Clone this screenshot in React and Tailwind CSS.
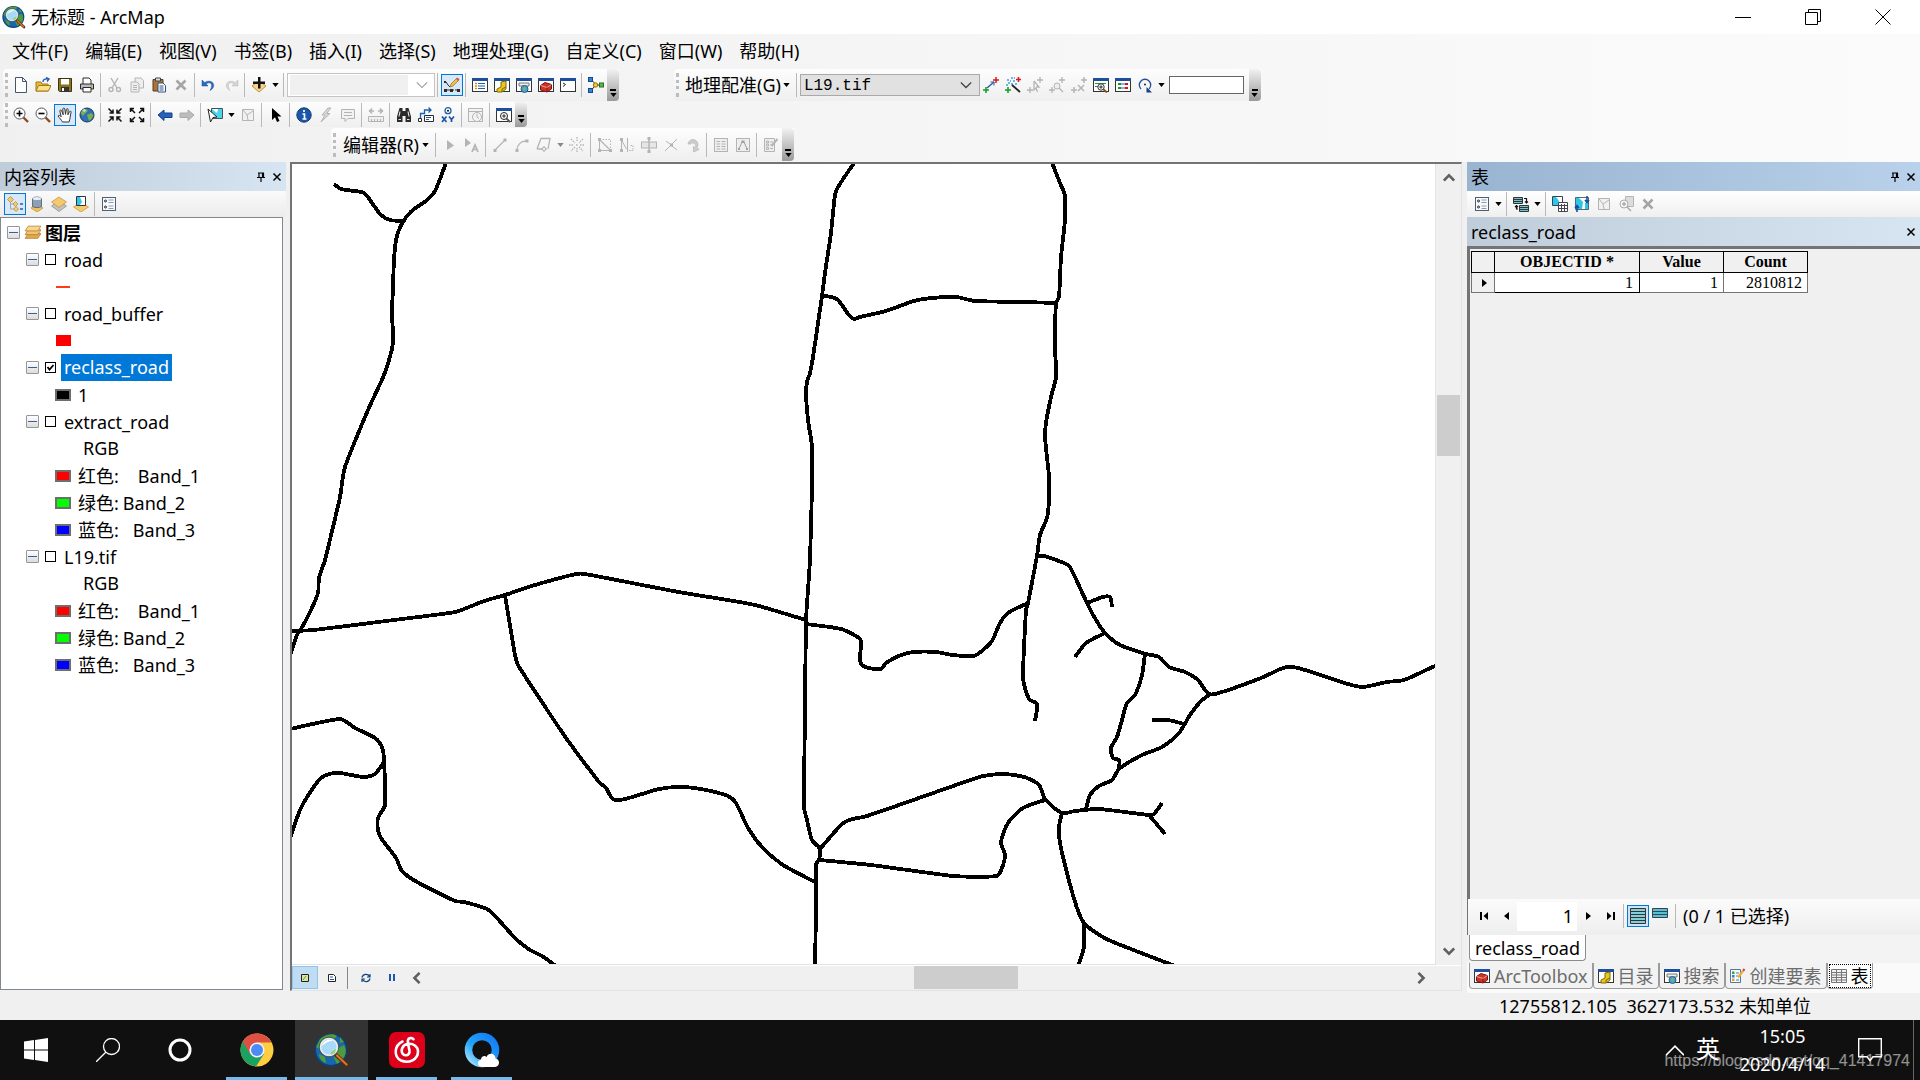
import React from "react";

const K = "#2b2b2b";
const B = "#1f5fae";
const G = "#b4b4b4";

const win = (
  <>
    <rect x=".5" y="1.500" width="15" height="13" fill="#fff" stroke="#333" />
    <rect x="0" y="1" width="16" height="3" fill="#1d4f9c" />
  </>
);
const layerShape = (fill, stroke) => (
  <path d="M2.500 2.500h11v11h-11zM3 3l4 5 1 5M7 8l6-4" fill={fill} stroke={stroke} />
);

const ICONS = {
  fresh: <path d="M2.500.5h7l4 4v11h-11zM9.500.5v4h4" fill="#fff" stroke="#44566f" />,
  open: (
    <>
      <path d="M1 14V5h5l1 2h6v7z" fill="#e8b93c" stroke="#a57a16" />
      <path d="M1 14l2.500-5.500H16L13.500 14z" fill="#fde08a" stroke="#a57a16" />
      <path d="M8 5c0-2.500 2-3.500 5-3M11 .5l3 1.500-2 2.500" fill="none" stroke={B} strokeWidth="1.400" />
    </>
  ),
  save: (
    <>
      <path d="M1.500 1.500h13v13h-12l-1-1z" fill="#8a7420" stroke="#3b3417" />
      <rect x="4" y="2" width="8" height="5.500" fill="#fff" />
      <rect x="4" y="10" width="8" height="4.500" fill="#333" />
      <rect x="5" y="11" width="2" height="3" fill="#fff" />
    </>
  ),
  print: (
    <>
      <path d="M4 7V1h6l2 2v4" fill="#fff" stroke={K} />
      <path d="M1.500 7h13v5h-13z" fill="#b9bcc0" stroke={K} />
      <path d="M4 10.500h8v4.500H4z" fill="#fff" stroke={K} />
      <rect x="11.500" y="8" width="1.500" height="1.500" fill="#d5a400" />
    </>
  ),
  cut: (
    <g fill="none" stroke={G} strokeWidth="1.400">
      <path d="M4 1l6 10M11 1L5 11" /><circle cx="4" cy="12.500" r="2" /><circle cx="11.500" cy="12.500" r="2" />
    </g>
  ),
  copy: (
    <g fill="#eee" stroke={G}>
      <path d="M6 1h6l2.500 2.500V11H6z" /><path d="M2 5h6l2 2v8H2zM4 8.500h4M4 10.500h4M4 12.500h4" />
    </g>
  ),
  paste: (
    <>
      <path d="M2 2.500h10V14H2z" fill="#a9763a" stroke="#5b3d17" />
      <path d="M4.500 1h5v3h-5z" fill="#ddd" stroke="#444" />
      <path d="M7 6h5l2.500 2.500V15H7zM8.500 9h4M8.500 11h4M8.500 13h4" fill="#fff" stroke="#33517c" />
    </>
  ),
  del: <path d="M3.500 3.500l9 9M12.500 3.500l-9 9" stroke="#a5a5a5" strokeWidth="2.600" />,
  undo: <path d="M1 3v6h6L5.200 7C9 4 13 7 9 13.500 16 10 12.500 1 3.600 5.400z" fill="#2a6cc0" stroke="#1b4c90" strokeWidth=".5" />,
  redo: <path d="M15 3v6H9l1.800-2C7 4 3 7 7 13.500 0 10 3.500 1 12.400 5.400z" fill="#d4d4d4" stroke="#bbb" strokeWidth=".5" />,
  add: (
    <>
      <path d="M8 4l7 5-7 6-7-6z" fill="#f3d58b" stroke="#c19233" />
      <path d="M7 0h2.500v4.500H14V7H9.500v4.500H7V7H2V4.500h5z" fill="#111" />
    </>
  ),
  edit: (
    <>
      <path d="M2 13h4M7 13h3M11 13h3M2 5l2 3 2 2" stroke={K} fill="none" />
      <path d="M0 12h3v3H0zM6 12h3v3H6zM13 12h3v3h-3zM0 4h2v2H0z" fill={K} />
      <path d="M6 10L7 7l5.500-5.500 2 2L9 9z" fill="#f2c14a" stroke="#8f6a1c" strokeWidth=".7" />
      <path d="M12 2l1.500-1.500 2 2L14 4z" fill="#d9503c" />
    </>
  ),
  toc: <>{win}<path d="M3 6.500h2M3 9h2M3 11.500h2" stroke="#d18f15" strokeWidth="1.400" /><path d="M6 6.500h7M6 9h7M6 11.500h7" stroke={B} /></>,
  catalog: <>{win}<path d="M3 12l4-2V5l5-1v8l-4 3H3z" fill="#e9c61d" stroke="#7e6a08" /><path d="M8 15v-3l4-2" stroke="#7e6a08" fill="none" /></>,
  search: <>{win}<path d="M3 6h10v3H3z" fill="#eee" stroke="#777" /><circle cx="8.500" cy="12" r="3.500" fill="#4c9fd6" stroke="#2c5d8a" /><path d="M7 11l2-1 1 2-2 2z" fill="#6fc04c" /></>,
  toolbox: <>{win}<path d="M2.500 8.500L7 5.500l6.500 2V12L9 15l-6.500-2z" fill="#cf3428" stroke="#7c150f" /><path d="M2.500 8.500l6.500 2 4.500-3" stroke="#f2a198" fill="none" /><path d="M9 10.500V15" stroke="#7c150f" /></>,
  python: <>{win}<path d="M3 6l2.500 1.500L3 9.500" fill="none" stroke="#222" /></>,
  model: (
    <>
      <path d="M4 3.500l4 4-4 5M9 8h3" stroke={K} fill="none" />
      <rect x=".5" y=".5" width="4" height="4" fill="#2f86d8" stroke="#164a86" /><rect x=".5" y="11.500" width="4" height="4" fill="#2f86d8" stroke="#164a86" />
      <circle cx="7.500" cy="8" r="2.200" fill="#f6c632" stroke="#957110" /><rect x="11.500" y="6" width="4" height="4" fill="#58b947" stroke="#25701b" />
    </>
  ),
  zin: <><path d="M10 10l5 5" stroke="#8a4b20" strokeWidth="2.400" /><circle cx="6.500" cy="6.500" r="5.500" fill="#fff" stroke="#555" /><path d="M6.500 3.500v6M3.500 6.500h6" stroke="#000" strokeWidth="1.600" /></>,
  zout: <><path d="M10 10l5 5" stroke="#8a4b20" strokeWidth="2.400" /><circle cx="6.500" cy="6.500" r="5.500" fill="#fff" stroke="#555" /><path d="M3.500 6.500h6" stroke="#000" strokeWidth="1.600" /></>,
  hand: <path d="M5.500 15c-1-2-3-4-4.500-6 .8-1.300 2-.6 3.200.8L2.800 4c.2-1.300 1.500-1.200 1.900 0l1.500 3.800L5.800 2c.3-1.200 1.700-1.200 2 0l.7 5.300L9.400 2.300c.4-1 1.600-.8 1.700.3l-.2 5.200 1.700-3.300c.7-.8 1.700-.2 1.500.8C13 9 13.300 12 12 15z" fill="#fff" stroke="#333" />,
  globe: <><circle cx="8" cy="8" r="7" fill="#2f6fb8" stroke="#143a66" /><path d="M4 2.500c3-1.500 5 0 4.500 2L6 6.500 4 9 1.500 6zM8 8l4-2 2.500 2-2 4-2.500 2z" fill="#79b04a" /><path d="M3 3l3-1 1 2-2 1z" fill="#e8f4ff" opacity=".7" /></>,
  fixin: <path d="M1.500 1.500l4.500 4.500M6 2.500V6H2.500M14.500 1.500L10 6M10 2.500V6h3.500M1.500 14.500L6 10M2.500 10H6v3.500M14.500 14.500L10 10M10 13.500V10h3.500" stroke="#111" strokeWidth="1.500" fill="none" />,
  fixout: <path d="M6 6L1.500 1.500M1.500 5V1.500H5M10 6l4.500-4.500M11 1.500h3.500V5M6 10l-4.500 4.500M1.500 11v3.500H5M10 10l4.500 4.500M11 14.500h3.500V11" stroke="#111" strokeWidth="1.500" fill="none" />,
  back: <path d="M1 8l6-5v3h8v4.500H7V13.500z" fill="#2661bd" stroke="#12408a" />,
  fwd: <path d="M15 8L9 3v3H1v4.500h8V13.500z" fill="#bdbdbd" stroke="#aaa" />,
  selfeat: <><path d="M4.500 1.500h11v10h-11z" fill="#49d3ee" stroke="#455" /><path d="M5 2h6l-1 4z" fill="#fff" /><path d="M1 2l9 8-4 .5L3.500 15z" fill="#fff" stroke="#222" /></>,
  clearsel: layerShape("#f1f1f1", G),
  pointer: <path d="M4 1v12l3-2.800 2 4.800 2.500-1-2-4.500h4z" fill="#000" />,
  info: <><circle cx="8" cy="8" r="7.200" fill="#1b57a8" stroke="#0f3a78" /><path d="M8 3v2M6.500 7H8.500v5M6.500 12h4" stroke="#fff" strokeWidth="1.700" fill="none" /></>,
  bolt: <path d="M10 1L4 8h3l-4 7 9-8.500H8.500L13 1z" fill="#d8d8d8" stroke={G} />,
  html: <path d="M1.500 2.500h13v9H8l-3 3v-3H1.500zM4 5.500h8M4 8.500h8" fill="#f2f2f2" stroke={G} />,
  ruler: <><path d="M1 4h5M10 4h5M4 1.500L1.500 4 4 6.500M12 1.500L14.500 4 12 6.500" stroke={G} strokeWidth="1.500" fill="none" /><path d="M.5 9.500h15v5H.5zM3.500 12v2M6.500 12v2M9.500 12v2M12.500 12v2" fill="#eee" stroke={G} /></>,
  binoc: <><path d="M3.500 1h3v3h3V1h3L15 9.500V15H9.500V9h-3v6H1V9.500z" fill="#2a2a2a" /><path d="M3 9.500l1-5M13 9.500l-1-5M2.500 12.500h2.500M11 12.500h2.500" stroke="#ddd" strokeWidth="1.200" /></>,
  route: <><path d="M2.500 12V6.500h4V3H13M10.500.5L13 3l-2.500 2.500" stroke={B} strokeWidth="1.300" fill="none" /><path d="M.5 11.500h3v3h-3zM6.500 8.500h9v6h-9z" fill="#fff" stroke={K} /><path d="M8 10.500h5M8 12.500h3" stroke={B} /></>,
  xy: <><circle cx="8" cy="3.700" r="3" fill="none" stroke={B} strokeWidth="1.300" /><circle cx="8" cy="3.700" r="1" fill="#111" /><path d="M2 9.500l4.500 5.500M6.500 9.500L2 15M9 9.500l2.500 3 2.500-3M11.500 12.500V15" stroke="#1a55a8" strokeWidth="1.700" fill="none" /></>,
  time: <g fill="#f3f3f3" stroke={G}><rect x=".5" y="1.500" width="14" height="13" /><path d="M.5 4.500h14" /><circle cx="9" cy="10" r="4.500" /><path d="M9 7v3l2 1.500" /></g>,
  viewer: <>{win}<path d="M10 11l4 4" stroke="#555" strokeWidth="1.800" /><circle cx="8" cy="9" r="3.500" fill="#fff" stroke="#222" /><path d="M8 7.200v3.600M6.200 9h3.600" stroke="#222" /></>,
  etool: <path d="M5 3v10l7-4.500z" fill={G} />,
  etoola: <><path d="M1 1v9l6-4z" fill={G} /><path d="M8 15l3-7 3 7M9 12.500h4" stroke={G} strokeWidth="1.700" fill="none" /></>,
  seg: <><path d="M3 13L13 3" stroke={G} strokeWidth="1.300" /><path d="M1.500 12h3v3h-3zM11.500 1.500h3v3h-3z" fill={G} /></>,
  arc: <><path d="M3 13c0-5 4-9 9-9" stroke={G} strokeWidth="1.300" fill="none" /><path d="M1.500 12h3v3h-3zM11.500 2.500h3v3h-3z" fill={G} /></>,
  trace: <><path d="M1 12L5 1.500h9L12 12M1 12h5" stroke={G} strokeWidth="1.300" fill="none" /><path d="M8 9v6M5 12h6" stroke={G} /><circle cx="8" cy="12" r="1.800" fill="#eee" stroke={G} /></>,
  burst: <path d="M8 0v5M8 11v5M0 8h5M11 8h5M2 2l4 4M10 10l4 4M14 2l-4 4M6 10l-4 4M7 8h2" stroke={G} strokeWidth="1.300" strokeDasharray="1.500 1" />,
  verts: <><path d="M2.500 2.500v11h11" stroke={G} fill="none" /><path d="M2.500 2.500h11v11" stroke={G} fill="none" strokeDasharray="1.500 1.500" /><path d="M2.500 2.500l11 11" stroke={G} strokeWidth="1.300" /><path d="M1 1h3v3H1zM1 12h3v3H1zM12 12h3v3h-3z" fill={G} /></>,
  reshape: <><path d="M2.500 2v12M2.500 3l5 9M8.500 1v14" stroke={G} fill="none" /><path d="M10 13.500h4v-5h-3" stroke={G} fill="none" strokeDasharray="1.500 1" /><path d="M1 1h3v3H1zM1 12h3v3H1z" fill={G} /></>,
  cutpoly: <><rect x=".5" y="5" width="15" height="6" fill="#e6e6e6" stroke={G} /><path d="M8 1v14" stroke={G} strokeWidth="1.500" /><path d="M6.500 0h3v3h-3zM6.500 13h3v3h-3z" fill={G} /></>,
  split: <><path d="M2 14L14 2M3 4l4 3M9 9l5 4" stroke={G} /><path d="M7 6.500h3v3H7z" fill={G} /></>,
  rotate: <path d="M3 7a5 5 0 1 1 9 3.500l2 2L8.500 15V9.500l1.500 1.200A2.800 2.800 0 1 0 5.500 7z" fill="#ccc" stroke={G} strokeWidth=".7" />,
  attrs: <><rect x="1.500" y="1.500" width="13" height="13" fill="#eee" stroke={G} /><path d="M3.500 4.500h3.500M8.500 4.500h4M3.500 7h3.500M8.500 7h4M3.500 9.500h3.500M8.500 9.500h4M3.500 12h3.500M8.500 12h4" stroke={G} /></>,
  sketch: <><rect x="1.500" y="1.500" width="13" height="13" fill="#eee" stroke={G} /><path d="M4 12l3-7h2l3 7" stroke="#a0a0a0" fill="none" /><path d="M6.500 3.500h3v2.500h-3zM3 11h2v2H3zM11 11h2v2h-2z" fill="#a0a0a0" /></>,
  createg: <><path d="M1.500 1.500h10v13h-10zM3.500 4h2v2h-2zM3.500 7h2v2h-2zM3.500 10.500h2v2h-2zM7 5h3M7 8h3M7 11.500h3" fill="#eee" stroke={G} /><path d="M8.500 9l6-7" stroke={G} strokeWidth="2" /></>,
  create: <><path d="M.5 1.500h10v13H.5z" fill="#f7fbff" stroke="#51789f" /><path d="M2 3.500h2.500V6H2z" fill="#3d9e46" /><path d="M2 7h2.500v2.500H2z" fill="#2f7fd0" /><path d="M2 10.500h2.500V13H2z" fill="#e0a224" /><path d="M6 5h3M6 8h2M6 12h3" stroke="#51789f" /><path d="M8 9.500L13 3" stroke="#e8b23a" strokeWidth="2.200" /><path d="M13 3l1.500-2" stroke="#d9503c" strokeWidth="2.200" /></>,
  link: <><path d="M4 11l7-6" stroke={B} strokeWidth="1.400" /><path d="M7.500 5H11v3.500" stroke={B} fill="none" /><path d="M13 0v6M10 3h6" stroke="#e01515" strokeWidth="1.500" /><path d="M3 10v6M0 13h6" stroke="#159a20" strokeWidth="1.500" /></>,
  autolink: <><path d="M2 3h2M6 1h2M3 6h2M8 4h2M6 7h2M5 4h1M10 7h2M1 8h2M9 1h1" stroke="#39a7dd" strokeWidth="1.600" /><path d="M7 8l8 7" stroke="#222" strokeWidth="1.800" /><path d="M13.500 0v5M11 2.500h5" stroke="#e01515" strokeWidth="1.500" /><path d="M3 10v6M0 13h6" stroke="#159a20" strokeWidth="1.500" /></>,
  linkg1: <path d="M13 0v6M10 3h6M3 10v6M0 13h6M7 4v9l2-2 1.500 4M7 4l5 6H9" stroke={G} strokeWidth="1.300" fill="none" />,
  linkg2: <><path d="M13 0v6M10 3h6M3 10v6M0 13h6M10 11l4 4" stroke={G} strokeWidth="1.300" /><circle cx="8" cy="9" r="3" fill="#eee" stroke={G} /></>,
  linkg3: <path d="M13 0v6M10 3h6M3 10v6M0 13h6M7 8l6 6M13 8l-6 6" stroke={G} strokeWidth="1.500" />,
  geoview: <>{win}<path d="M2 6.500h11M2 9.500h3" stroke="#1b9a2b" /><path d="M10 12l4 3.500" stroke="#8a4b20" strokeWidth="1.800" /><circle cx="8" cy="10" r="3.200" fill="#fff" stroke="#333" /><path d="M8 8.300v3.400M6.300 10h3.400" stroke="#222" /></>,
  linktable: <>{win}<path d="M3 7h3M3 11h3" stroke="#159a20" strokeWidth="2" /><path d="M10 7h3M10 11h3" stroke="#d11" strokeWidth="2" /><path d="M6 7h4M6 11h4" stroke={B} /></>,
  spin: <><path d="M4 12A5.700 5.700 0 1 1 12 12" stroke="#23509a" strokeWidth="1.300" fill="none" /><path d="M9.500 10l5.500 5.500H9.500z" fill="#1d3f86" /><circle cx="8" cy="7.500" r="1" fill="#222" /></>,
  orderlist: <><path d="M3.500 5v8h4M4 8h5" stroke="#9aa7b4" fill="none" /><path d="M3.500.5l3 3-3 3-3-3zM8.500 5.500L11 8l-2.500 2.500L6 8zM9 10.500l2.500 2.500L9 15.500 6.500 13z" fill="#f1c877" stroke="#c28d2d" strokeWidth=".8" /><path d="M13 8h3M13 13h3" stroke={B} strokeWidth="1.300" /></>,
  source: <><path d="M8 8l6 4-6 4-6-4z" fill="#f1c35a" stroke="#bb8a25" strokeWidth=".7" /><path d="M3.500 2.500c2-2 7-2 9 0v8c-2 1.500-7 1.500-9 0z" fill="#8d9fb5" stroke="#4b5b70" strokeWidth=".8" /><ellipse cx="8" cy="2.600" rx="4.300" ry="1.500" fill="#e7edf4" /></>,
  visible: <><path d="M8 5l7.500 5L8 15.500.5 10z" fill="#c2c2c2" stroke="#888" strokeWidth=".7" /><path d="M8 1l7.500 5L8 11.500.5 6z" fill="#f5c971" stroke="#c08c2c" strokeWidth=".7" /></>,
  bysel: <><path d="M8 6l7.500 5L8 16 .5 11z" fill="#f5c971" stroke="#c08c2c" strokeWidth=".7" /><path d="M3.500 .5h9v9h-9z" fill="#fff" stroke="#333" /><path d="M4 1h3l2 5-2 3H4z" fill="#2dc6e8" /></>,
  options: <><rect x="1.500" y="1.500" width="13" height="13" fill="#f7fafd" stroke="#4c5f75" /><circle cx="4.500" cy="5" r="1" fill="none" stroke="#222" /><circle cx="4.500" cy="11" r="1" fill="none" stroke="#222" /><path d="M7.500 4h5M7.500 6.500h5M7.500 10h5M7.500 12.500h5" stroke="#8b9bad" /></>,
  layers: <><path d="M4 9h12l-3 4.500H1z" fill="#e2a94a" stroke="#b07a22" strokeWidth=".7" /><path d="M4 5.500h12L13 10H1z" fill="#f0c274" stroke="#b07a22" strokeWidth=".7" /><path d="M4 2h12l-3 4.500H1z" fill="#f8d794" stroke="#b07a22" strokeWidth=".7" /></>,
  related: <><path d="M.5 1.500h9v6h-9zM6.500 9.500h9v6h-9z" fill="#69c6d0" stroke="#333" /><path d="M.5 3.500h9M.5 5.500h9M6.500 11.500h9M6.500 13.500h9" stroke="#333" /><path d="M11 2.500h2.500V7M12 5.500l1.500 1.500L15 5.500M3.500 9.500V13H5M2 11l1.500-1.500L5 11" stroke="#111" strokeWidth="1.200" fill="none" /></>,
  selattr: <><path d="M.5 .5h10v9H.5z" fill="#fff" stroke="#345" /><path d="M1 1h3l3 4-1 4H1z" fill="#2dc6e8" /><path d="M6.500 6.500h9v9h-9zM6.500 9.500h9M6.500 12.500h9M9.500 8v7M12.500 8v7" fill="#fff" stroke="#445" /></>,
  switchsel: <><path d="M1.500 1.500h13v12h-13z" fill="#2dc6e8" stroke="#567" /><path d="M5 2l4 4-1 7h3V7l3-1V2z" fill="#fff" /><path d="M13 0v6M11 4l2 2.500L15 4M3 16v-6M1 12l2-2.500L5 12" stroke="#164f9e" strokeWidth="1.600" fill="none" /></>,
  zoomsel: <><path d="M7.500 .5h8v10h-8z" fill="#ddd" stroke={G} /><circle cx="6" cy="8" r="4" fill="#f6f6f6" stroke="#aaa" /><path d="M6 6v4M4 8h4M9 11l4 4" stroke="#aaa" strokeWidth="1.500" /></>,
  tablei: <path d="M.5 1.500h15v13H.5zM.5 4.500h15M.5 7h15M.5 9.500h15M.5 12h15M5.500 2v12M10.500 2v12" fill="#f2f2f2" stroke="#777" />,
};

function Icon({ n, className = "size-4" }) {
  return <svg viewBox="0 0 16 16" className={`${className} shrink-0`} aria-hidden="true">{ICONS[n]}</svg>;
}
function Tool({ n, label, active }) {
  return (
    <button aria-label={label} className={active ? "flex size-[22px] shrink-0 items-center justify-center border border-[#0078d7] bg-[#d8e8f8]" : "flex size-[22px] shrink-0 items-center justify-center"}>
      <Icon n={n} />
    </button>
  );
}
const Sep = () => <span className="mx-[2px] h-6 w-[2px] shrink-0 border-l border-[#b9b9b9]" />;
const Caret = ({ dim }) => (
  <svg viewBox="0 0 8 5" className="h-[4px] w-[7px] shrink-0" aria-hidden="true"><path d="M0 0h8L4 5z" fill={dim ? "#888" : "#000"} /></svg>
);
const DropArrow = ({ label, dim }) => <button aria-label={label} className="flex h-[22px] w-[11px] shrink-0 items-center justify-center"><Caret dim={dim} /></button>;
const Grip = () => <span className="mx-[2px] h-6 w-[3px] shrink-0 border-l-[3px] border-dotted border-[#bdbdbd]" />;
function Overflow() {
  return (
    <button aria-label="工具栏选项" className="flex w-3 shrink-0 flex-col items-center justify-end gap-[2px] self-stretch rounded-r-sm bg-gradient-to-b from-[#f2f2f2] to-[#9a9a9a] pb-1">
      <span className="h-[2px] w-[6px] bg-black" /><Caret />
    </button>
  );
}
const Tools = ({ items }) => items.map(([n, label, active], i) => (n === "|" ? <Sep key={i} /> : n === "v" ? <DropArrow key={i} label={label} dim={active} /> : <Tool key={i} n={n} label={label} active={active} />));
const BAR = "flex items-center rounded-l bg-gradient-to-b from-[#fdfdfd] to-[#efefef]";

function ArcLogo({ className }) {
  return (
    <svg viewBox="0 0 36 36" className={className} aria-hidden="true">
      <circle cx="17" cy="18" r="16.500" fill="#0c3f78" />
      <circle cx="17" cy="18" r="15" fill="#1767ad" />
      <path d="M6 7c5-5 14-6 17-3l-5 5-8 3-3 6-5-3zM22 17l8-4c3 5 2 11-2 15l-5 4-3-6zM5 22l6 3 1 6c-4-1-7-5-7-9zM26 5l4 5-4 1z" fill="#4f9a3a" />
      <path d="M22 23l11 10" stroke="#5a2c10" strokeWidth="4" strokeLinecap="round" />
      <path d="M23 23.500l9.500 9" stroke="#d9742c" strokeWidth="2.200" strokeLinecap="round" />
      <circle cx="15" cy="15" r="8.500" fill="#a6daf8" stroke="#e6e9ec" strokeWidth="2" />
      <circle cx="15" cy="15" r="9.800" fill="none" stroke="#4a5158" strokeWidth=".9" />
      <path d="M8 14c1-5 7-8 11-5-5 0-8 2-11 5z" fill="#fff" />
      <path d="M17 20l5-3-1 4-4 2z" fill="#9ad072" />
    </svg>
  );
}

const PinClose = () => (
  <span className="flex items-center gap-[6px]">
    <button aria-label="自动隐藏"><svg viewBox="0 0 10 10" className="size-[10px]"><path d="M2 1h6M3 1v4.500M6.500 1v4.500M7.500 1v4.500M1 5.500h8M5 6v4" stroke="#000" strokeWidth="1.200" fill="none" /></svg></button>
    <CloseX label="关闭" />
  </span>
);
const CloseX = ({ label }) => <button aria-label={label}><svg viewBox="0 0 10 10" className="size-[10px]"><path d="M1.500 1.500l7 7M8.500 1.500l-7 7" stroke="#000" strokeWidth="1.500" /></svg></button>;

const Expander = () => (
  <button aria-label="折叠" className="flex size-[13px] shrink-0 items-center justify-center rounded-[1px] border border-[#969696] bg-gradient-to-b from-white to-[#dcdcdc]">
    <span className="h-px w-[9px] bg-[#3b5ba5]" />
  </button>
);
function Layer({ name, checked, selected }) {
  const id = `layer-${name}`;
  return (
    <div className="flex h-[27px] items-center pl-[25px]">
      <Expander />
      <span className="relative ml-[6px] flex size-[11px]">
        <input id={id} type="checkbox" defaultChecked={checked} className="peer size-[11px] appearance-none border border-black bg-white" />
        <svg viewBox="0 0 11 11" className="pointer-events-none absolute inset-0 hidden size-[11px] peer-checked:block"><path d="M2.500 5l2 2.500L8.500 3" stroke="#000" strokeWidth="1.800" fill="none" /></svg>
      </span>
      <label htmlFor={id} className={selected ? "ml-[5px] h-[27px] bg-[#0078d7] px-[3px] leading-[26px] text-white" : "ml-[5px] px-[3px] leading-[26px]"}>{name}</label>
    </div>
  );
}
function Legend({ swatch, label, band, gap = "" }) {
  return (
    <div className="flex h-[27px] items-center pl-[54px]">
      <span className={`${swatch} h-3 w-4 border-2 border-[#6e6e6e]`} />
      <span className="ml-[7px] leading-[26px]">{label}</span>
      {band && <span className={`${gap} leading-[26px]`}>{band}</span>}
    </div>
  );
}
const Bands = () => (
  <>
    <div className="h-[27px] pl-[82px] leading-[26px]">RGB</div>
    <Legend swatch="bg-[#ff0000]" label="红色:" band="Band_1" gap="ml-[19px]" />
    <Legend swatch="bg-[#00ff00]" label="绿色:" band="Band_2" gap="ml-[4px]" />
    <Legend swatch="bg-[#0000ff]" label="蓝色:" band="Band_3" gap="ml-[14px]" />
  </>
);

const ROADS = [
  "447,160 435,191 426,201 414,209 407,216 403,222 399,230 396,240 394,260 393,287 392,313 393,335 392,349 384,375 368,410 345,467 340,497 333,527 325,560 319,578 318,593 310,612 301,629 297,635 290,656",
  "334,184 341,189 364,193 372,203 381,215 390,220 402,221",
  "290,631 314,630 394,620 455,612 484,601 505,595 535,585 576,574 585,574 637,584 684,593 734,601 759,606 806,620",
  "806,624 841,629 859,638 861,642 860,660 862,665 869,668 881,669 886,663 901,655 914,652 936,652 953,655 974,656 983,650 992,641 1000,623 1008,613 1028,603",
  "856,160 838,187 835,195 831,233 825,273 822,296 813,357 810,373 807,382 806,393 808,420 812,447 812,487 810,560 806,620 805,707 804,807 807,820 812,840 820,849 819,860 816,864 816,908 815,966",
  "1051,160 1060,183 1064,192 1065,198 1065,220 1061,257 1059,297 1056,303 1055,347 1056,377 1051,397 1046,423 1045,437 1049,477 1049,500 1047,518 1040,535 1037,556 1028,603 1026,610 1023,677 1029,699 1037,704 1035,721",
  "822,296 832,297 838,300 849,315 854,319 860,317 886,311 914,301 932,298 956,297 975,301 1023,302 1057,303",
  "1037,556 1044,556 1064,563 1070,567 1087,603 1096,620 1105,633 1120,645 1146,654 1159,657 1169,667 1185,672 1198,680 1209,694 1222,692 1261,678 1283,668 1292,667 1305,670 1348,684 1363,687 1387,682 1404,680 1424,671 1437,665",
  "1087,603 1103,597 1110,597 1112,607",
  "1105,633 1086,643 1075,657",
  "1145,654 1142,675 1135,695 1127,703 1122,720 1117,737 1111,748 1113,758 1119,760 1119,769",
  "1209,695 1201,701 1190,715 1179,733 1162,747 1142,755 1119,769 1112,780 1099,786 1090,795 1086,809",
  "1152,720 1168,720 1184,724",
  "820,849 841,825 849,820 867,816 919,798 979,777 990,775 1002,774 1014,775 1027,778 1039,785 1045,799 1062,813 1075,811 1099,809 1149,815 1154,814 1162,803",
  "1149,815 1165,834",
  "820,860 871,865 953,876 997,876 1002,868 1005,855 1001,842 1008,823 1023,808 1045,800",
  "1062,813 1059,827 1060,843 1068,877 1077,908 1084,923 1101,936 1118,944 1175,966",
  "1084,923 1084,947 1078,966",
  "505,595 512,637 518,665 566,738 599,782 606,788 613,799 625,799 659,789 680,787 701,789 728,796 736,803 748,828 762,847 783,865 815,882",
  "290,729 340,719 355,728 375,738 382,747 384,760 385,805 378,818 378,830 381,838 396,858 402,871 417,882 455,901 464,902 487,909 496,917 516,939 530,950 542,956 556,966",
  "290,838 301,808 318,781 326,775 339,773 364,777 375,774 384,762",
];

// Rounds a polyline: a gentle cubic through every vertex.
function smooth(points) {
  const p = points.split(" ").map((s) => s.split(",").map(Number));
  let d = `M${p[0][0]} ${p[0][1]}`;
  for (let i = 0; i < p.length - 1; i++) {
    const a = p[i];
    const b = p[i + 1];
    const len = Math.hypot(b[0] - a[0], b[1] - a[1]);
    const tangent = (prev, next) => {
      const l = Math.hypot(next[0] - prev[0], next[1] - prev[1]) || 1;
      const k = Math.min(len * 0.25, 8) / l;
      return [(next[0] - prev[0]) * k, (next[1] - prev[1]) * k];
    };
    const ta = tangent(p[i - 1] || a, b);
    const tb = tangent(a, p[i + 2] || b);
    d += `C${a[0] + ta[0]} ${a[1] + ta[1]} ${b[0] - tb[0]} ${b[1] - tb[1]} ${b[0]} ${b[1]}`;
  }
  return d;
}

const Chevron = ({ d, className = "size-[12px]", stroke = "#606060", w = 3 }) => (
  <svg viewBox="0 0 14 14" className={className} aria-hidden="true"><path d={d} stroke={stroke} strokeWidth={w} fill="none" /></svg>
);

const TREE_TABS = [["toolbox", "ArcToolbox"], ["catalog", "目录"], ["search", "搜索"], ["create", "创建要素"]];
const NAV = "flex h-[22px] w-[22px] items-center justify-center";

export default function App() {
  return (
    <div className="flex h-screen flex-col overflow-hidden bg-[#f0f0f0] font-['Noto_Sans','Noto_Sans_CJK_SC',sans-serif] text-[18px] leading-[26px] text-black">
      <header className="flex h-[34px] shrink-0 items-center bg-white pl-[2px]">
        <ArcLogo className="size-[24px]" />
        <h1 className="ml-[5px] grow">无标题 - ArcMap</h1>
        <div className="flex gap-[54px] pr-[29px]">
          <button aria-label="最小化"><svg viewBox="0 0 16 16" className="size-4"><path d="M0 8.500h16" stroke="#000" /></svg></button>
          <button aria-label="还原"><svg viewBox="0 0 16 16" className="size-4"><path d="M.5 3.500h12v12H.5zM3.500 3.500v-3h12v12h-3" fill="none" stroke="#000" /></svg></button>
          <button aria-label="关闭"><svg viewBox="0 0 16 16" className="size-4"><path d="M.5.5l15 15M15.500.5l-15 15" stroke="#000" /></svg></button>
        </div>
      </header>

      <div className="flex h-[128px] shrink-0 flex-col bg-gradient-to-r from-[#f0f0f0] to-[#fbfbfb]">
        <nav className="flex h-[35px] shrink-0 items-center gap-[17px] pb-[2px] pl-3">
          {["文件(F)", "编辑(E)", "视图(V)", "书签(B)", "插入(I)", "选择(S)", "地理处理(G)", "自定义(C)", "窗口(W)", "帮助(H)"].map((m) => <button key={m}>{m}</button>)}
        </nav>
        <div className="flex h-[33px] shrink-0 items-start">
          <div className={`${BAR} ml-[3px] h-[32px]`}>
            <Grip />
            <Tools items={[["fresh", "新建"], ["open", "打开"], ["save", "保存"], ["print", "打印"], ["|"], ["cut", "剪切"], ["copy", "复制"], ["paste", "粘贴"], ["del", "删除"], ["|"], ["undo", "撤消"], ["redo", "恢复"], ["|"], ["add", "添加数据"], ["v", "添加数据选项"], ["|"]]} />
            <span className="relative flex h-[24px] w-[148px] items-center border border-[#c4c4c4] bg-white pl-[2px]">
              <select aria-label="地图比例" disabled className="h-[20px] w-[118px] appearance-none bg-[#f0f0f0]" />
              <Chevron d="M1 4l6 6 6-6" w={1.3} stroke="#999" className="ml-2 size-[12px]" />
            </span>
            <Sep />
            <Tools items={[["edit", "编辑器工具条", true], ["|"], ["toc", "内容列表"], ["catalog", "目录"], ["search", "搜索"], ["toolbox", "ArcToolbox"], ["python", "Python"], ["|"], ["model", "模型构建器"]]} />
            <Overflow />
          </div>
          <div className={`${BAR} ml-[55px] h-[32px]`}>
            <Grip />
            <button className="ml-[4px] flex items-center gap-[2px] pr-1">地理配准(G)<Caret /></button>
            <Sep />
            <span className="relative flex h-[22px] w-[180px] items-center border border-[#a9a9a9] bg-[#e1e1e1]">
              <select aria-label="配准图层" className="h-[20px] w-full appearance-none pt-[3px] pl-[3px] font-['Liberation_Mono',monospace] text-[16px] leading-[17px]"><option>L19.tif</option></select>
              <Chevron d="M1 4l6 6 6-6" w={1.5} stroke="#444" className="pointer-events-none absolute right-[7px] size-[12px]" />
            </span>
            <Tools items={[["link", "添加控制点"], ["autolink", "自动配准"], ["linkg1", "选择连接"], ["linkg2", "缩放至连接"], ["linkg3", "删除连接"], ["geoview", "查看器"], ["linktable", "查看连接表"], ["spin", "旋转"], ["v", "旋转选项"]]} />
            <input aria-label="旋转角度" className="mr-[5px] ml-[2px] h-[18px] w-[75px] border border-[#666] bg-white" />
            <Overflow />
          </div>
        </div>
        <div className="flex h-[26px] shrink-0 items-start">
          <div className={`${BAR} ml-[3px] h-[25px]`}>
            <Grip />
            <Tools items={[["zin", "放大"], ["zout", "缩小"], ["hand", "平移", true], ["globe", "全图"], ["|"], ["fixin", "固定比例放大"], ["fixout", "固定比例缩小"], ["|"], ["back", "上一视图"], ["fwd", "下一视图"], ["|"], ["selfeat", "选择要素"], ["v", "选择要素选项"], ["clearsel", "清除所选要素"], ["|"], ["pointer", "选择元素"], ["|"], ["info", "识别"], ["bolt", "超链接"], ["html", "HTML 弹出窗口"], ["|"], ["ruler", "测量"], ["|"], ["binoc", "查找"], ["route", "查找路径"], ["xy", "转到 XY"], ["|"], ["time", "时间滑块"], ["|"], ["viewer", "创建查看器窗口"]]} />
            <Overflow />
          </div>
        </div>
        <div className="flex h-[34px] shrink-0 items-start">
          <div className={`${BAR} ml-[331px] h-[33px]`}>
            <Grip />
            <button className="ml-[5px] flex items-center gap-[3px] pr-1">编辑器(R)<Caret /></button>
            <Tools items={[["|"], ["etool", "编辑工具"], ["etoola", "编辑注记工具"], ["|"], ["seg", "直线段"], ["arc", "端点弧段"], ["trace", "追踪"], ["v", "追踪选项", true], ["burst", "点"], ["|"], ["verts", "编辑折点"], ["reshape", "整形要素"], ["cutpoly", "裁剪面"], ["split", "分割"], ["rotate", "旋转"], ["|"], ["attrs", "属性"], ["sketch", "草图属性"], ["|"], ["createg", "创建要素"]]} />
            <Overflow />
          </div>
        </div>
      </div>

      <main className="flex min-h-0 grow">
        <aside className="mr-1 flex w-[286px] shrink-0 flex-col">
          <div className="flex h-[29px] shrink-0 items-center justify-between bg-gradient-to-r from-[#bfcddb] to-[#d7e4f2] pr-1 pl-1">
            <h2>内容列表</h2><PinClose />
          </div>
          <div className="flex h-[26px] shrink-0 items-center bg-gradient-to-b from-[#fafafa] to-[#ececec] pl-1">
            <Tools items={[["orderlist", "按绘制顺序列出", true], ["source", "按源列出"], ["visible", "按可见性列出"], ["bysel", "按选择列出"], ["|"], ["options", "选项"]]} />
          </div>
          <div className="mr-[3px] grow border border-[#828790] bg-white pt-px">
            <div className="flex h-[27px] items-center pl-[6px] font-bold">
              <Expander /><Icon n="layers" className="mx-1 size-[17px]" /><span className="leading-[26px]">图层</span>
            </div>
            <Layer name="road" />
            <div className="flex h-[27px] items-center pl-[55px]"><span className="h-[2px] w-[14px] bg-[#ff3a1a]" /></div>
            <Layer name="road_buffer" />
            <div className="flex h-[27px] items-center pl-[55px]"><span className="h-[11px] w-[15px] bg-[#ff0000]" /></div>
            <Layer name="reclass_road" checked selected />
            <Legend swatch="bg-black" label="1" />
            <Layer name="extract_road" />
            <Bands />
            <Layer name="L19.tif" />
            <Bands />
          </div>
          <div className="h-[30px] shrink-0" />
        </aside>

        <section className="mb-[29px] flex min-w-0 grow flex-col border-t-2 border-l-2 border-[#747474] border-r border-r-[#e3e3e3] border-b border-b-[#e3e3e3]">
          <div className="flex min-h-0 grow">
            <div className="min-w-0 grow overflow-hidden border-r border-b border-[#e3e3e3] bg-white">
              <svg viewBox="292 164 1143 800" preserveAspectRatio="xMinYMin slice" className="block h-full w-full" role="img" aria-label="道路地图">
                {ROADS.map((p) => <path key={p} d={smooth(p)} fill="none" stroke="#000" strokeWidth="3.800" strokeLinejoin="round" shapeRendering="crispEdges" />)}
              </svg>
            </div>
            <div className="flex w-[25px] shrink-0 flex-col items-center pt-2 pb-2">
              <button aria-label="向上滚动"><Chevron d="M1 10l6-6 6 6" /></button>
              <div className="grow-[209]" />
              <div className="h-[61px] w-[23px] bg-[#cdcdcd]" />
              <div className="grow-[484]" />
              <button aria-label="向下滚动"><Chevron d="M1 4l6 6 6-6" /></button>
            </div>
          </div>
          <div className="flex h-[25px] shrink-0 items-center border-t border-white pb-px">
            <button aria-label="数据视图" className="flex h-[23px] w-[26px] items-center justify-center border border-[#8ec5f0] bg-[#bfdcf3]">
              <svg viewBox="0 0 8 8" className="size-[8px]"><path d="M.5.5h7v7h-7z" fill="#d9e39b" stroke="#222" /><path d="M2 6l3-4" stroke="#5b9b55" /></svg>
            </button>
            <button aria-label="布局视图" className="ml-[10px]"><svg viewBox="0 0 8 8" className="size-[8px]"><path d="M.5.5h5l2 2v5h-7z" fill="#fff" stroke="#222" /><path d="M2 3h3M2 5.500h4" stroke={B} /></svg></button>
            <span className="ml-[11px] h-[22px] w-px bg-[#888]" />
            <button aria-label="刷新" className="ml-[13px]"><svg viewBox="0 0 10 10" className="size-[10px]"><path d="M1 4.500C2 .5 7 .5 8.500 3.500M9 5.500c-1 4-6 4-7.500 1M9 1v3H6M1 9V6h3" stroke="#12457f" strokeWidth="1.200" fill="none" /></svg></button>
            <button aria-label="暂停" className="ml-[18px] flex gap-[2px]"><span className="h-[7px] w-[2px] bg-[#1c56b0]" /><span className="h-[7px] w-[2px] bg-[#1c56b0]" /></button>
            <button aria-label="向左滚动" className="ml-[16px]"><Chevron d="M10 1L4 7l6 6" /></button>
            <div className="grow-[492]" />
            <div className="h-[23px] w-[104px] bg-[#cdcdcd]" />
            <div className="grow-[397]" />
            <button aria-label="向右滚动" className="mr-[34px]"><Chevron d="M4 1l6 6-6 6" /></button>
          </div>
        </section>

        <aside className="ml-[5px] flex w-[453px] shrink-0 flex-col">
          <div className="flex h-[29px] shrink-0 items-center justify-between bg-gradient-to-r from-[#99b4d1] to-[#b9d1ea] pr-1 pl-1">
            <h2>表</h2><PinClose />
          </div>
          <div className="flex h-[26px] shrink-0 items-center bg-gradient-to-b from-white to-[#efefef] pl-1">
            <Tools items={[["options", "表选项"], ["v", "表选项菜单"], ["|"], ["related", "关联表"], ["v", "关联表菜单"], ["|"], ["selattr", "按属性选择"], ["switchsel", "切换选择"], ["clearsel", "清除所选内容"], ["zoomsel", "缩放至所选项"], ["del", "删除所选项"]]} />
          </div>
          <div className="flex h-[29px] shrink-0 items-center justify-between bg-gradient-to-r from-[#bfcddb] to-[#d7e4f2] pr-1 pl-1">
            <h3>reclass_road</h3><CloseX label="关闭表" />
          </div>
          <div className="min-h-0 grow border-t-[3px] border-l-[3px] border-[#747474] pt-[2px] pl-px">
            <table className="w-[337px] table-fixed border-collapse font-['Liberation_Serif',serif] text-[16px] leading-[18px]">
              <thead>
                <tr className="h-[21px]">
                  <th className="w-[23px] border border-black bg-[#f0f0f0]" />
                  <th className="w-[145px] border border-black bg-[#f0f0f0]">OBJECTID *</th>
                  <th className="w-[84px] border border-black bg-[#f0f0f0]">Value</th>
                  <th className="border border-black bg-[#f0f0f0]">Count</th>
                </tr>
              </thead>
              <tbody>
                <tr className="h-[20px] bg-white text-right">
                  <td className="border border-[#747474] bg-[#f0f0f0] pl-[10px]"><svg viewBox="0 0 5 8" className="h-[8px] w-[5px]"><path d="M0 0l5 4-5 4z" /></svg></td>
                  <td className="border border-black pr-[6px]">1</td>
                  <td className="border border-[#747474] pr-[5px]">1</td>
                  <td className="border border-[#747474] pr-[5px]">2810812</td>
                </tr>
              </tbody>
            </table>
          </div>
          <div className="flex h-[36px] shrink-0 items-center border-l border-[#747474] bg-gradient-to-b from-[#fbfbfb] to-[#eeeeee] pb-[2px] pl-[5px]">
            <button aria-label="首条记录" className={NAV}><svg viewBox="0 0 9 8" className="h-[8px] w-[9px]"><path d="M0 0h2v8H0zM8 0v8L3.500 4z" /></svg></button>
            <button aria-label="上一条" className={NAV}><svg viewBox="0 0 5 8" className="h-[8px] w-[5px]"><path d="M5 0v8L0 4z" /></svg></button>
            <input aria-label="当前记录" defaultValue="1" className="h-[29px] w-[60px] bg-white pr-1 text-right" />
            <button aria-label="下一条" className={NAV}><svg viewBox="0 0 5 8" className="h-[8px] w-[5px]"><path d="M0 0v8l5-4z" /></svg></button>
            <button aria-label="末条记录" className={NAV}><svg viewBox="0 0 9 8" className="h-[8px] w-[9px]"><path d="M7 0h2v8H7zM1 0v8l4.500-4z" /></svg></button>
            <Sep />
            <button aria-label="显示所有记录" className="flex size-[22px] items-center justify-center border border-[#0078d7] bg-[#cfe4f7]"><svg viewBox="0 0 16 16" className="size-4"><path d="M.5.5h15v15H.5zM1 3.500h14M1 6.500h14M1 9.500h14M1 12.500h14" fill="#7fd0dc" stroke="#333" /></svg></button>
            <button aria-label="显示所选记录" className="mb-[6px] ml-[3px]"><svg viewBox="0 0 16 10" className="h-[10px] w-4"><path d="M.5.5h15v9H.5zM1 3.500h14M1 6.500h14" fill="#58c0d2" stroke="#345" /></svg></button>
            <span className="ml-[5px]"><Sep /></span>
            <span className="ml-[5px]">(0 / 1 已选择)</span>
          </div>
          <div className="flex h-[28px] shrink-0 items-start bg-[#f3f3f3] pl-[2px]">
            <button className="h-[26px] rounded-b border border-t-0 border-[#8c8c8c] bg-white px-[5px] leading-[24px]">reclass_road</button>
          </div>
          <div className="flex h-[30px] shrink-0 items-start bg-[#fafafa] pl-[2px]">
            {TREE_TABS.map(([n, t]) => (
              <button key={t} className="flex h-[26px] items-center gap-1 rounded-b border border-t-0 border-[#9b9b9b] bg-[#f2f2f2] px-1 leading-[24px] text-[#6d6d6d]"><Icon n={n} className="size-4" />{t}</button>
            ))}
            <button className="h-[26px] rounded-b border border-t-0 border-[#9b9b9b] bg-white px-px"><span className="flex h-[24px] items-center gap-1 border border-dotted border-black px-px leading-[22px]"><Icon n="tablei" className="size-4" />表</span></button>
          </div>
          <footer className="h-[27px] shrink-0 pl-8 leading-[27px]"><span className="whitespace-pre">12755812.105  3627173.532 未知单位</span></footer>
        </aside>
      </main>

      <div className="relative flex h-[60px] shrink-0 items-stretch bg-[#101010] text-white">
        <button aria-label="开始" className="flex w-[72px] items-center justify-center"><svg viewBox="0 0 24 24" className="size-6"><path d="M0 3.500l10-1.400v9.400H0zM11 2l13-2v11.500H11zM0 12.500h10v9.400L0 20.500zM11 12.500h13V24l-13-2z" fill="#fff" /></svg></button>
        <button aria-label="搜索" className="flex w-[72px] items-center justify-center"><svg viewBox="0 0 24 24" className="size-6"><circle cx="15.500" cy="8.500" r="8" fill="none" stroke="#fff" strokeWidth="1.300" /><path d="M10 14L0 24" stroke="#fff" strokeWidth="1.300" /></svg></button>
        <button aria-label="Cortana" className="flex w-[75px] items-center justify-center pr-1"><svg viewBox="0 0 24 24" className="size-6"><circle cx="12" cy="12" r="10" fill="none" stroke="#fff" strokeWidth="3" /></svg></button>
        <button aria-label="Chrome" className="flex w-[75px] flex-col items-center">
          <span className="flex grow items-center pt-[3px]"><svg viewBox="0 0 34 34" className="size-[34px]">
            <circle cx="17" cy="17" r="16.500" fill="#ffcd40" />
            <path d="M17 17L3 8.300A16.500 16.500 0 0 0 16 33.500L24 21z" fill="#1aa260" />
            <path d="M2.700 8.500A16.500 16.500 0 0 1 31.500 9.500H17l-7 11.500z" fill="#dd5144" />
            <circle cx="17" cy="17" r="7.600" fill="#f1f1f1" /><circle cx="17" cy="17" r="6" fill="#4c8bf5" />
          </svg></span>
          <span className="h-[3px] w-[61px] bg-[#76b9ed]" />
        </button>
        <button aria-label="ArcMap" className="mx-px flex w-[73px] flex-col items-center bg-[#333333]">
          <span className="flex grow items-center pt-[3px]"><ArcLogo className="size-[36px]" /></span>
          <span className="h-[3px] w-full bg-[#76b9ed]" />
        </button>
        <button aria-label="网易云音乐" className="flex w-[75px] flex-col items-center">
          <span className="flex grow items-center pt-[3px]"><svg viewBox="0 0 36 36" className="size-[36px]"><rect width="36" height="36" rx="7" fill="#dd001b" /><path d="M13.500 9.500C5 13.500 4.500 25 12 28.500c8 3.500 17-1 17-9 0-5-5-8.500-10.500-7.500-5 1-7 6-5 9.500 2 3 6.500 2 7-1.500.3-3-2.500-9-1.500-12 .7-2.300 3.500-2.500 5.500-.8" fill="none" stroke="#fff" strokeWidth="2.600" strokeLinecap="round" /></svg></span>
          <span className="h-[3px] w-[61px] bg-[#76b9ed]" />
        </button>
        <button aria-label="QQ浏览器" className="flex w-[75px] flex-col items-center">
          <span className="flex grow items-center pt-[3px]"><svg viewBox="0 0 36 36" className="size-[36px]"><defs><linearGradient id="qb" x1="1" y1="0" x2="0" y2="1"><stop offset="0" stopColor="#1479f5" /><stop offset=".6" stopColor="#22a4f8" /><stop offset="1" stopColor="#a8e4ff" /></linearGradient></defs><circle cx="18" cy="18" r="13.500" fill="none" stroke="url(#qb)" strokeWidth="7.500" /><path d="M18 35c-5-.5-5.500-6-1-7.500 0-3.500 4-4.500 5.500-2.500 2-5 9-4 9 1.500 5 1 4.500 8-.5 8.500z" fill="#fff" /></svg></span>
          <span className="h-[3px] w-[61px] bg-[#76b9ed]" />
        </button>
        <div className="grow" />
        <div className="flex items-stretch">
          <button aria-label="显示隐藏的图标" className="mr-3 flex items-center"><Chevron d="M0 11l7-7 7 7" w={1.300} stroke="#fff" className="size-[18px]" /></button>
          <button className="mb-[3px] text-[24px]">英</button>
          <div className="mx-4 flex w-[93px] flex-col items-center justify-center gap-[2px] leading-[26px]"><time>15:05</time><time>2020/4/14</time></div>
          <button aria-label="通知" className="mr-[31px] ml-[13px] flex items-center"><svg viewBox="0 0 24 24" className="size-6"><path d="M.7.700h22.600v18H15L12 22.500 9 18.700H.7z" fill="none" stroke="#fff" strokeWidth="1.400" /></svg></button>
          <span className="mr-[6px] w-px bg-[#666]" />
        </div>
        <a href="https://blog.csdn.net/qq_41417974" className="absolute right-[10px] bottom-[7px] font-['Liberation_Sans',sans-serif] text-[16px] leading-[24px] text-white/55">https://blog.csdn.net/qq_41417974</a>
      </div>
    </div>
  );
}
